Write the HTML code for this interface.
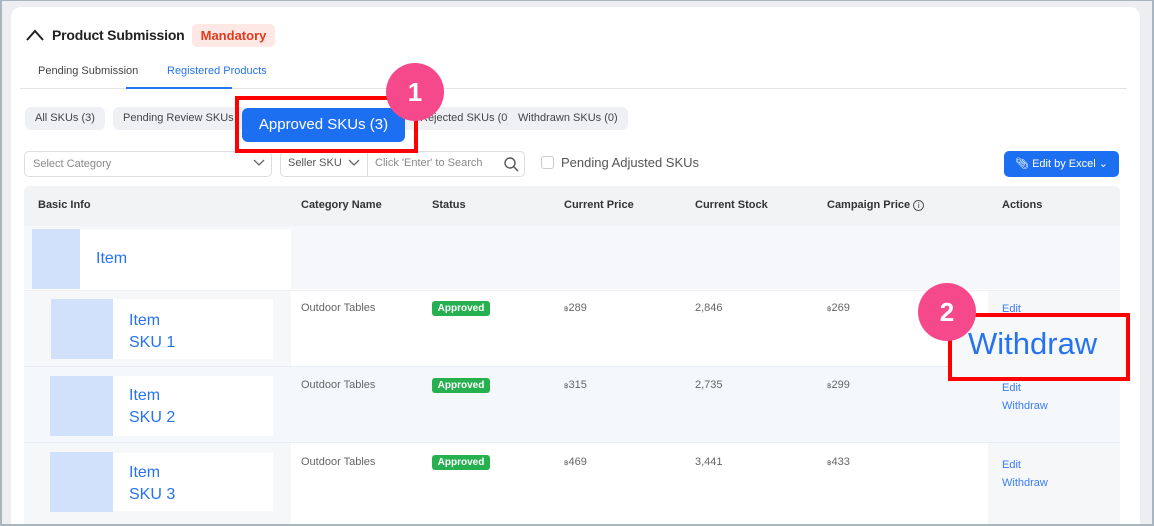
<!DOCTYPE html>
<html><head><style>
*{box-sizing:border-box;margin:0;padding:0}
html,body{overflow:hidden}
body{width:1154px;height:526px;overflow:hidden;background:#eceef2;font-family:"Liberation Sans",sans-serif;position:relative}
.frame{position:absolute;left:0;top:0;width:1154px;height:526px;border:2px solid #a8b6bf;border-top-width:1px;pointer-events:none;z-index:20}
.card{position:absolute;left:11px;top:7px;width:1129px;height:519px;background:#fff;border-radius:10px 10px 0 0}
.a{position:absolute;white-space:nowrap}
.pill{position:absolute;height:23px;top:107px;background:#eef0f3;border-radius:6px;font-size:11px;color:#444;line-height:23px;padding:0 10px}
.hd{font-size:11px;font-weight:bold;color:#333;top:199px}
.cell{font-size:11px;color:#666}
.ap{position:absolute;width:58px;height:15px;background:#27b04f;color:#fff;font-size:10px;font-weight:bold;border-radius:3px;text-align:center;line-height:15px}
.blue{color:#2673f0}
.lnk{font-size:11px;color:#3a7cf5}
.circ{position:absolute;width:58px;height:58px;border-radius:50%;background:#f6498c;color:#fff;font-size:26px;font-weight:bold;text-align:center;line-height:58px;z-index:12}
.red{position:absolute;border:4px solid #f00;z-index:10}
</style></head><body>
<div class="card"></div>
<svg class="a" style="left:25px;top:28px" width="20" height="14"><path d="M2 12 L10 3 L18 12" stroke="#222" stroke-width="2" fill="none"/></svg>
<div class="a" style="left:52px;top:27px;font-size:14px;font-weight:bold;color:#222;letter-spacing:-0.2px">Product Submission</div>
<div class="a" style="left:192px;top:24px;width:83px;height:23px;background:#fde8e6;border-radius:5px;color:#e4391b;font-size:13px;font-weight:bold;text-align:center;line-height:23px">Mandatory</div>
<div class="a" style="left:38px;top:65px;font-size:11px;color:#444">Pending Submission</div>
<div class="a" style="left:167px;top:65px;font-size:11px;color:#2673f0">Registered Products</div>
<div class="a" style="left:20px;top:88px;width:1107px;height:1px;background:#e4e4e4"></div>
<div class="a" style="left:126px;top:87px;width:106px;height:2px;background:#2673f0"></div>
<div class="pill" style="left:25px">All SKUs (3)</div>
<div class="pill" style="left:113px">Pending Review SKUs</div>
<div class="pill" style="left:398px;padding-left:22px">Rejected SKUs (0)</div>
<div class="pill" style="left:508px">Withdrawn SKUs (0)</div>
<div class="a" style="left:242px;top:108px;width:163px;height:34px;background:#1d6ff2;border-radius:6px;color:#fff;font-size:15px;text-align:center;line-height:34px;z-index:9">Approved SKUs (3)</div>
<div class="red" style="left:235px;top:96px;width:183px;height:57px"></div>
<div class="circ" style="left:386px;top:63px">1</div>
<div class="a" style="left:24px;top:151px;width:248px;height:26px;border:1px solid #ddd;border-radius:5px;font-size:11px;color:#888;line-height:24px;padding-left:8px">Select Category</div>
<svg class="a" style="left:252px;top:158px" width="14" height="10"><path d="M2 2 L7 7 L12 2" stroke="#666" stroke-width="1.3" fill="none"/></svg>
<div class="a" style="left:280px;top:151px;width:245px;height:26px;border:1px solid #ddd;border-radius:5px"></div>
<div class="a" style="left:367px;top:151px;width:1px;height:26px;background:#ddd"></div>
<div class="a" style="left:288px;top:157px;font-size:11px;color:#555">Seller SKU</div>
<svg class="a" style="left:347px;top:158px" width="14" height="10"><path d="M2 2 L7 7 L12 2" stroke="#666" stroke-width="1.3" fill="none"/></svg>
<div class="a" style="left:375px;top:157px;font-size:11px;color:#888">Click 'Enter' to Search</div>
<svg class="a" style="left:503px;top:156px" width="16" height="16"><circle cx="7" cy="7" r="5" stroke="#555" stroke-width="1.4" fill="none"/><path d="M11 11 L15 15" stroke="#555" stroke-width="1.4"/></svg>
<div class="a" style="left:541px;top:156px;width:13px;height:13px;border:1px solid #ccc;border-radius:3px"></div>
<div class="a" style="left:561px;top:155px;font-size:13px;color:#555">Pending Adjusted SKUs</div>
<div class="a" style="left:1004px;top:151px;width:115px;height:26px;background:#1d6ff2;border-radius:5px;color:#fff;font-size:11px;line-height:26px;text-align:center">&#x1F4CE;&#xFE0E; Edit by Excel &#x2304;</div>
<!-- table -->
<div class="a" style="left:24px;top:186px;width:1096px;height:40px;background:#f2f3f5;border-radius:6px 6px 0 0"></div>
<div class="a hd" style="left:38px">Basic Info</div>
<div class="a hd" style="left:301px">Category Name</div>
<div class="a hd" style="left:432px">Status</div>
<div class="a hd" style="left:564px">Current Price</div>
<div class="a hd" style="left:695px">Current Stock</div>
<div class="a hd" style="left:827px">Campaign Price <span style="display:inline-block;width:11px;height:11px;border:1px solid #555;border-radius:50%;font-size:8px;text-align:center;line-height:10px;font-weight:normal">i</span></div>
<div class="a hd" style="left:1002px">Actions</div>
<div class="a" style="left:24px;top:226px;width:1096px;height:63px;background:#f5f7fa"></div>
<div class="a" style="left:32px;top:229px;width:259px;height:60px;background:#fff"></div>
<div class="a" style="left:32px;top:229px;width:48px;height:60px;background:#d1e1fb"></div>
<div class="a blue" style="left:96px;top:250px;font-size:16px">Item</div>
<!-- rows -->
<div class="a" style="left:24px;top:290px;width:1096px;height:76px;background:#fff;border-top:1px solid #eef0f3"></div>
<div class="a" style="left:24px;top:366px;width:1096px;height:76px;background:#f4f7fb;border-top:1px solid #eaedf0"></div>
<div class="a" style="left:24px;top:442px;width:1096px;height:84px;background:#fff;border-top:1px solid #eaedf0"></div>
<div class="a" style="left:24px;top:291px;width:267px;height:75px;background:#f5f7f9"></div>
<div class="a" style="left:24px;top:443px;width:267px;height:83px;background:#f5f7f9"></div>
<div class="a" style="left:988px;top:291px;width:132px;height:75px;background:#f5f7f9"></div>
<div class="a" style="left:988px;top:443px;width:132px;height:83px;background:#f5f7f9"></div>

<div class="a" style="left:51px;top:299px;width:222px;height:60px;background:#fff"></div>
<div class="a" style="left:51px;top:299px;width:62px;height:60px;background:#d1e1fb"></div>
<div class="a blue" style="left:129px;top:310px;font-size:16px;line-height:22px">Item<br>SKU 1</div>
<div class="a" style="left:50px;top:376px;width:223px;height:60px;background:#fff"></div>
<div class="a" style="left:50px;top:376px;width:63px;height:60px;background:#d1e1fb"></div>
<div class="a blue" style="left:129px;top:385px;font-size:16px;line-height:22px">Item<br>SKU 2</div>
<div class="a" style="left:50px;top:453px;width:223px;height:58px;background:#fff"></div>
<div class="a" style="left:50px;top:452px;width:63px;height:60px;background:#d1e1fb"></div>
<div class="a blue" style="left:129px;top:462px;font-size:16px;line-height:22px">Item<br>SKU 3</div>

<div class="a cell" style="left:301px;top:302px">Outdoor Tables</div>
<div class="a cell" style="left:301px;top:379px">Outdoor Tables</div>
<div class="a cell" style="left:301px;top:456px">Outdoor Tables</div>
<div class="ap" style="left:432px;top:301px">Approved</div>
<div class="ap" style="left:432px;top:378px">Approved</div>
<div class="ap" style="left:432px;top:455px">Approved</div>
<div class="a cell" style="left:564px;top:302px"><small style="font-size:7px">฿</small>289</div>
<div class="a cell" style="left:564px;top:379px"><small style="font-size:7px">฿</small>315</div>
<div class="a cell" style="left:564px;top:456px"><small style="font-size:7px">฿</small>469</div>
<div class="a cell" style="left:695px;top:302px">2,846</div>
<div class="a cell" style="left:695px;top:379px">2,735</div>
<div class="a cell" style="left:695px;top:456px">3,441</div>
<div class="a cell" style="left:827px;top:302px"><small style="font-size:7px">฿</small>269</div>
<div class="a cell" style="left:827px;top:379px"><small style="font-size:7px">฿</small>299</div>
<div class="a cell" style="left:827px;top:456px"><small style="font-size:7px">฿</small>433</div>
<div class="a lnk" style="left:1002px;top:303px">Edit</div>
<div class="a lnk" style="left:1002px;top:379px;line-height:18px">Edit<br>Withdraw</div>
<div class="a lnk" style="left:1002px;top:456px;line-height:18px">Edit<br>Withdraw</div>
<div class="red" style="left:948px;top:313px;width:182px;height:68px;background:#f7f8fa"></div>
<div class="a" style="left:968px;top:326px;font-size:31px;color:#2673f0;z-index:11">Withdraw</div>
<div class="circ" style="left:918px;top:283px">2</div>
<div class="a" style="left:1140px;top:0;width:14px;height:526px;background:#eceef2;z-index:5"></div>
<div class="frame"></div>
</body></html>
